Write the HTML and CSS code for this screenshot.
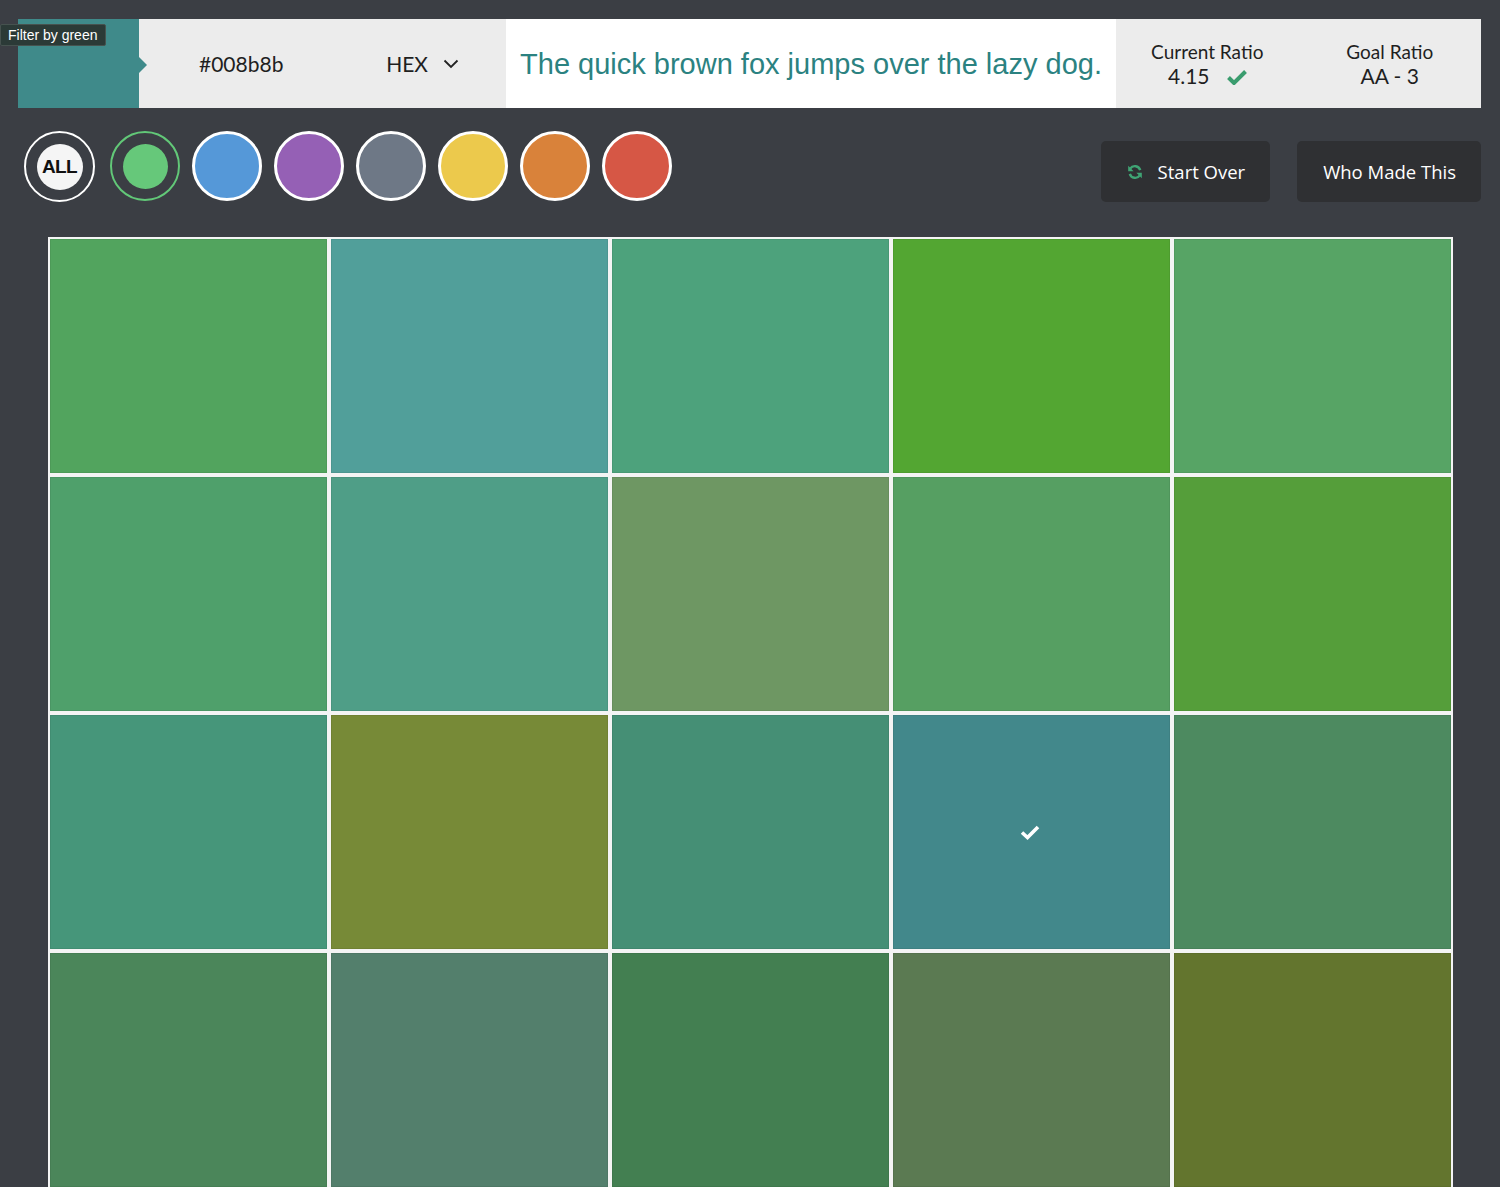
FILE: index.html
```html
<!DOCTYPE html>
<html lang="en">
<head>
<meta charset="utf-8">
<title>Color Contrast</title>
<link rel="stylesheet" href="styles.css">
</head>
<body>
<div class="page">
  <header class="topbar">
    <div class="swatch"><span class="swatch-arrow"></span></div>
    <div class="hex">
      <span class="hex-value">#008b8b</span>
      <span class="hex-format">HEX
        <svg class="chev" width="16" height="10" viewBox="0 0 16 10"><path d="M1.5 1.5 L8 8 L14.5 1.5" fill="none" stroke="#222" stroke-width="1.8"/></svg>
      </span>
    </div>
    <div class="sample">The quick brown fox jumps over the lazy dog.</div>
    <div class="ratios">
      <div class="ratio">
        <div class="ratio-label">Current Ratio</div>
        <div class="ratio-value">4.15
          <svg class="ok" width="20" height="16" viewBox="0 0 20 16"><path d="M1.5 8.5 L7 14 L18.5 2.5" fill="none" stroke="#3a9c6e" stroke-width="4"/></svg>
        </div>
      </div>
      <div class="ratio">
        <div class="ratio-label">Goal Ratio</div>
        <div class="ratio-value">AA - 3</div>
      </div>
    </div>
  </header>

  <div class="toolbar">
    <div class="filters">
      <div class="filter filter-all"><span class="all-inner">ALL</span></div>
      <div class="filter filter-active"><span class="active-inner"></span></div>
      <div class="filter dot dot-blue"></div>
      <div class="filter dot dot-purple"></div>
      <div class="filter dot dot-gray"></div>
      <div class="filter dot dot-yellow"></div>
      <div class="filter dot dot-orange"></div>
      <div class="filter dot dot-red"></div>
    </div>
    <div class="actions">
      <button class="btn">
        <svg class="refresh" width="16" height="16" viewBox="0 0 16 16">
          <path d="M13.2 6.2 A5.6 5.6 0 0 0 3.2 4.6" fill="none" stroke="#3fa474" stroke-width="2.4"/>
          <path d="M1.2 1.8 L1.2 7.2 L6.6 7.2 Z" fill="#3fa474"/>
          <path d="M2.8 9.8 A5.6 5.6 0 0 0 12.8 11.4" fill="none" stroke="#3fa474" stroke-width="2.4"/>
          <path d="M14.8 14.2 L14.8 8.8 L9.4 8.8 Z" fill="#3fa474"/>
        </svg>
        Start Over
      </button>
      <button class="btn">Who Made This</button>
    </div>
  </div>

  <div class="grid">
    <div class="tile" style="background:#52a45e"></div>
    <div class="tile" style="background:#519f9a"></div>
    <div class="tile" style="background:#4da27c"></div>
    <div class="tile" style="background:#53a632"></div>
    <div class="tile" style="background:#57a465"></div>

    <div class="tile" style="background:#4fa06b"></div>
    <div class="tile" style="background:#4f9e87"></div>
    <div class="tile" style="background:#6e9763"></div>
    <div class="tile" style="background:#569f62"></div>
    <div class="tile" style="background:#559e3a"></div>

    <div class="tile" style="background:#46967a"></div>
    <div class="tile" style="background:#778a37"></div>
    <div class="tile" style="background:#458f75"></div>
    <div class="tile tile-selected" style="background:#42888b">
      <svg width="20" height="16" viewBox="0 0 20 16"><path d="M2 8.5 L7.5 13.5 L18 3" fill="none" stroke="#fff" stroke-width="3.6"/></svg>
    </div>
    <div class="tile" style="background:#4d8a60"></div>

    <div class="tile" style="background:#4b865a"></div>
    <div class="tile" style="background:#537f6c"></div>
    <div class="tile" style="background:#437f51"></div>
    <div class="tile" style="background:#5b7a52"></div>
    <div class="tile" style="background:#63752e"></div>
  </div>
</div>
<div class="tooltip">Filter by green</div>
</body>
</html>
```

FILE: styles.css
```css
* { box-sizing: border-box; }

html, body {
  margin: 0;
  padding: 0;
  background: #3b3e44;
  font-family: Lato, "Open Sans", sans-serif;
  overflow: hidden;
}

.page {
  padding: 19px 19px 0 18px;
}

.topbar {
  display: flex;
  height: 89px;
}

.swatch {
  position: relative;
  width: 121px;
  background: #3f8a8a;
}

.swatch-arrow {
  position: absolute;
  right: -8px;
  top: 38px;
  width: 0;
  height: 0;
  border-top: 8px solid transparent;
  border-bottom: 8px solid transparent;
  border-left: 8px solid #3f8a8a;
}

.hex {
  width: 367px;
  background: #ececec;
  display: flex;
  align-items: center;
  justify-content: space-between;
  padding: 0 47px 0 60px;
  font-size: 21px;
  color: #1f1f1f;
}

.hex-format {
  display: flex;
  align-items: center;
  gap: 15px;
}

.sample {
  width: 610px;
  background: #ffffff;
  display: flex;
  align-items: center;
  justify-content: center;
  font-family: "Liberation Sans", Arial, sans-serif;
  font-size: 29px;
  color: #2b8281;
  padding-top: 2px;
}

.ratios {
  flex: 1;
  background: #ececec;
  display: flex;
  align-items: center;
  padding-top: 1px;
}

.ratio {
  flex: 1;
  text-align: center;
  color: #1f1f1f;
  line-height: 24px;
}

.ratio-label {
  font-size: 19px;
}

.ratio-value {
  font-size: 21px;
  display: flex;
  justify-content: center;
  align-items: center;
  gap: 17px;
}

.ok { margin-top: 2px; }

.toolbar {
  display: flex;
  justify-content: space-between;
  align-items: flex-start;
  height: 129px;
  padding: 23px 0 0 6px;
}

.filters {
  display: flex;
  gap: 12px;
}

.filter {
  width: 70px;
  height: 70px;
  border-radius: 50%;
  border: 3px solid #ffffff;
  display: flex;
  align-items: center;
  justify-content: center;
}

.filter-all {
  width: 71px;
  height: 71px;
  margin-right: 3px;
  border-width: 2.5px;
}

.all-inner {
  width: 46px;
  height: 46px;
  border-radius: 50%;
  background: #f5f5f5;
  color: #111;
  font-family: "Liberation Sans", Arial, sans-serif;
  font-weight: 700;
  font-size: 19px;
  letter-spacing: -0.6px;
  display: flex;
  align-items: center;
  justify-content: center;
}

.filter-active {
  border-color: #62c878;
  border-width: 2.5px;
}

.active-inner {
  width: 45px;
  height: 45px;
  border-radius: 50%;
  background: #66c87a;
}

.dot-blue { background: #5598d8; }
.dot-purple { background: #9560b5; }
.dot-gray { background: #6e7886; }
.dot-yellow { background: #ecc94c; }
.dot-orange { background: #d9823a; }
.dot-red { background: #d65745; }

.actions {
  display: flex;
  gap: 27px;
  margin-top: 10px;
}

.btn {
  height: 61px;
  padding: 0 25px 0 26px;
  border: none;
  border-radius: 5px;
  background: #2f3033;
  color: #ffffff;
  font-family: "Open Sans", sans-serif;
  font-size: 18.5px;
  display: flex;
  align-items: center;
  gap: 15px;
}

.grid {
  display: grid;
  grid-template-columns: repeat(5, 277px);
  grid-auto-rows: 234px;
  gap: 4px;
  padding: 2px;
  background: #f4f4f4;
  width: max-content;
  margin-left: 30px;
}

.tile {
  box-shadow: inset 0 0 0 1px rgba(0,0,0,0.06);
}

.tile-selected {
  display: flex;
  align-items: center;
  justify-content: center;
  padding-right: 4px;
}

.tooltip {
  position: absolute;
  left: 0;
  top: 24px;
  width: 106px;
  height: 22px;
  background: #2b3a37;
  border: 1px solid #46524f;
  border-radius: 2px;
  color: #ffffff;
  font-family: "Liberation Sans", Arial, sans-serif;
  font-size: 14px;
  line-height: 20px;
  padding-left: 7px;
}
```
